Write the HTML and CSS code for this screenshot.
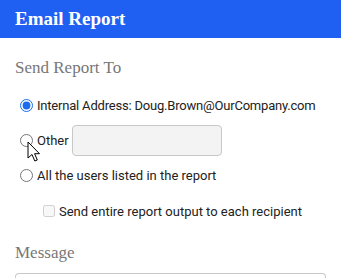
FILE: index.html
```html
<!DOCTYPE html>
<html>
<head>
<meta charset="utf-8">
<link rel="stylesheet" href="styles.css">
</head>
<body>
<div class="header">Email Report</div>
<div class="content">
  <div class="section-title">Send Report To</div>
  <div class="options">
    <label class="row"><input type="radio" name="to" checked><span class="addr">Internal Address: Doug.Brown@OurCompany.com</span></label>
    <label class="row"><input type="radio" name="to"><span>Other</span><input type="text" class="other-input"></label>
    <label class="row"><input type="radio" name="to"><span>All the users listed in the report</span></label>
    <label class="row sub"><input type="checkbox" disabled><span>Send entire report output to each recipient</span></label>
  </div>
  <div class="section-title msg">Message</div>
  <div class="textarea"></div>
</div>
<svg class="cursor" width="14" height="22" viewBox="0 0 14 22"><path d="M1 1 L1 17 L5 13.5 L7.8 20 L10.3 19 L7.6 12.7 L12.5 12.7 Z" fill="#fff" stroke="#000" stroke-width="1" stroke-linejoin="round"/></svg>
</body>
</html>
```
FILE: styles.css
```css
html, body { margin: 0; padding: 0; background: #fff; }
body { width: 341px; height: 278px; overflow: hidden; position: relative; font-family: Roboto, "Liberation Sans", sans-serif; color: #222; }
.header { height: 38px; background: #1F5FF1; color: #fff; font-family: "Liberation Serif", serif; font-weight: bold; font-size: 19px; line-height: 38px; padding-left: 15px; }
.content { padding: 0 15px; }
.section-title { font-family: "Liberation Serif", serif; font-size: 17px; color: #777; margin-top: 21px; line-height: 18px; }
.options { margin-top: 11px; display: flex; flex-direction: column; }
.row { display: flex; align-items: center; height: 35px; font-size: 13px; gap: 4px; padding-left: 5px; white-space: nowrap; }
.addr { letter-spacing: -0.2px; }
.row input[type=radio] { margin: 0; width: 13px; height: 13px; accent-color: #1a6cf0; }
.other-input { margin: 0 0 0 -1px; width: 150px; height: 31px; box-sizing: border-box; border: 1px solid #c8c8c8; border-radius: 4px; background: #f3f3f3; }
.row.sub { padding-left: 28px; height: 36px; }
.row.sub input { margin: 0; width: 12px; height: 12px; }
.msg { margin-top: 15px; }
.textarea { margin-top: 11px; height: 10px; border: 1px solid #c8c8c8; border-bottom: none; border-radius: 4px 4px 0 0; }
.cursor { position: absolute; left: 27px; top: 141px; }
```
